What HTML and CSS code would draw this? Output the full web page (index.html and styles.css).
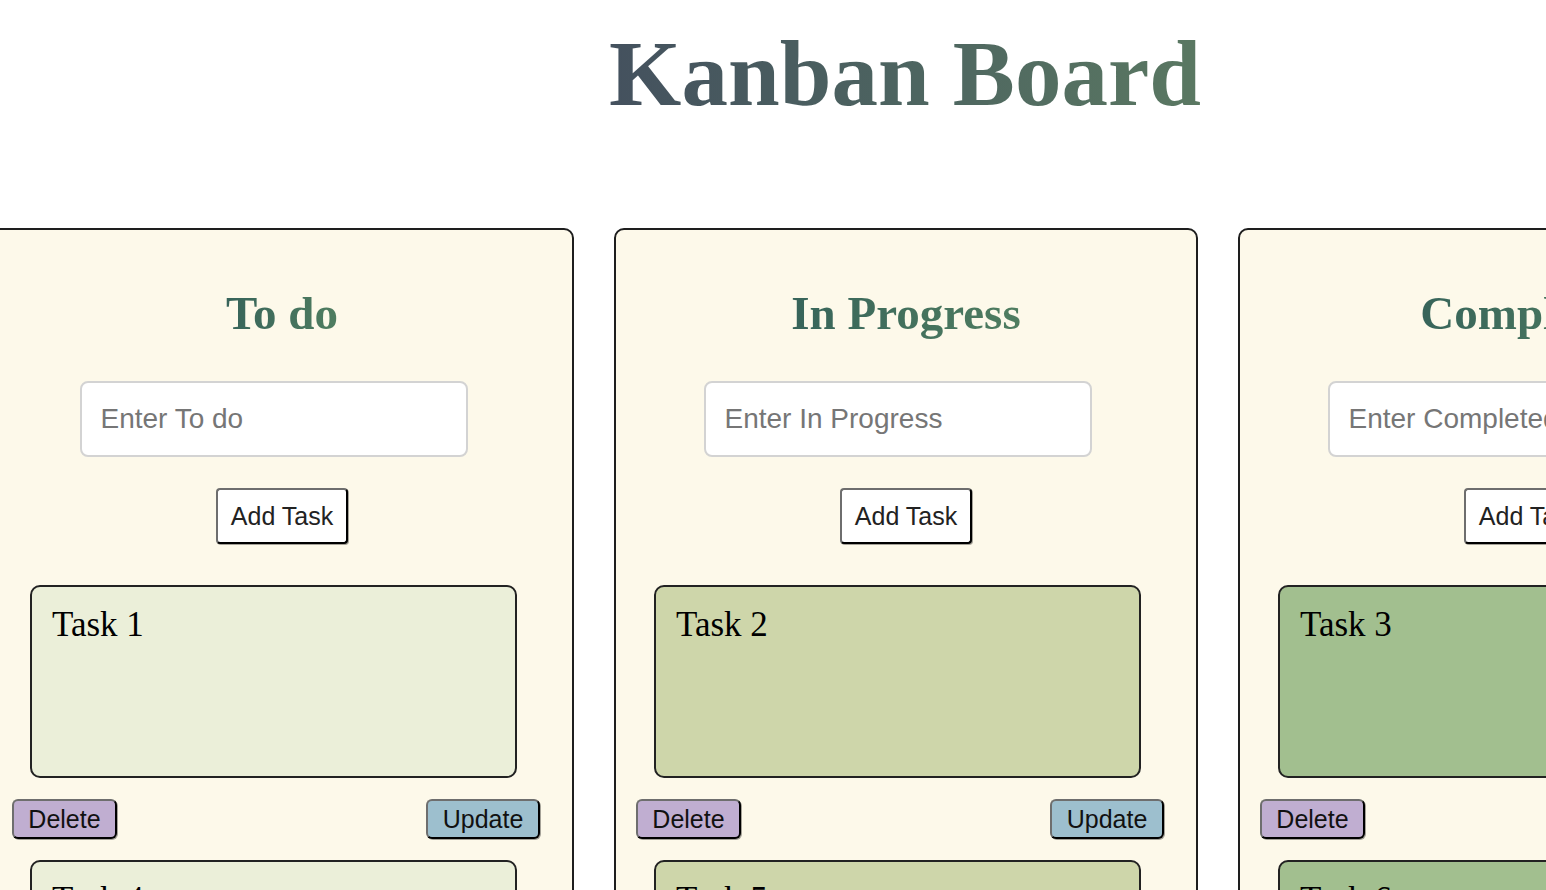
FILE: index.html
```html
<!DOCTYPE html>
<html lang="en">
<head>
<meta charset="utf-8">
<title>Kanban Board</title>
<link rel="stylesheet" href="styles.css">
</head>
<body>
<div class="page">
  <h1 class="title">Kanban Board</h1>
  <div class="board">
    <section class="column todo">
      <h2 class="column-title">To do</h2>
      <input class="task-input" type="text" placeholder="Enter To do">
      <button class="add-btn">Add Task</button>
      <div class="task">
        <div class="card">Task 1</div>
        <div class="actions"><button class="btn delete">Delete</button><button class="btn update">Update</button></div>
      </div>
      <div class="task">
        <div class="card">Task 4</div>
        <div class="actions"><button class="btn delete">Delete</button><button class="btn update">Update</button></div>
      </div>
    </section>
    <section class="column progress">
      <h2 class="column-title">In Progress</h2>
      <input class="task-input" type="text" placeholder="Enter In Progress">
      <button class="add-btn">Add Task</button>
      <div class="task">
        <div class="card">Task 2</div>
        <div class="actions"><button class="btn delete">Delete</button><button class="btn update">Update</button></div>
      </div>
      <div class="task">
        <div class="card">Task 5</div>
        <div class="actions"><button class="btn delete">Delete</button><button class="btn update">Update</button></div>
      </div>
    </section>
    <section class="column done">
      <h2 class="column-title">Completed</h2>
      <input class="task-input" type="text" placeholder="Enter Completed">
      <button class="add-btn">Add Task</button>
      <div class="task">
        <div class="card">Task 3</div>
        <div class="actions"><button class="btn delete">Delete</button><button class="btn update">Update</button></div>
      </div>
      <div class="task">
        <div class="card">Task 6</div>
        <div class="actions"><button class="btn delete">Delete</button><button class="btn update">Update</button></div>
      </div>
    </section>
  </div>
</div>
</body>
</html>
```
FILE: styles.css
```css
html, body {
  margin: 0;
  padding: 0;
  overflow: hidden;
  background: #ffffff;
}

.page {
  width: 1830px;
  margin-left: -10px;
  font-family: "Liberation Serif", "Times New Roman", serif;
}

.title {
  display: block;
  width: fit-content;
  margin: 21px auto 101px;
  font-size: 93px;
  line-height: 106px;
  font-weight: bold;
  text-align: center;
  background: linear-gradient(90deg, #44515e 0%, #4d6460 50%, #5a7862 100%);
  -webkit-background-clip: text;
  background-clip: text;
  color: transparent;
}

.board {
  display: flex;
  gap: 40px;
  align-items: flex-start;
}

.column {
  box-sizing: border-box;
  width: 584px;
  flex: 0 0 584px;
  height: 900px;
  border: 2px solid #1e1e1e;
  border-radius: 10px;
  background: #fdf9ea;
  padding-top: 57px;
  display: flex;
  flex-direction: column;
  align-items: center;
}

.column-title {
  margin: 0;
  font-size: 47px;
  line-height: 53px;
  font-weight: bold;
  background: linear-gradient(90deg, #37645a 0%, #4f7d60 100%);
  -webkit-background-clip: text;
  background-clip: text;
  color: transparent;
}

.task-input {
  box-sizing: border-box;
  width: 388px;
  height: 76px;
  margin: 41px 17px 0 0;
  padding: 0 19px;
  border: 2px solid #d3d3d3;
  border-radius: 8px;
  background: #ffffff;
  font-family: "Liberation Sans", Arial, sans-serif;
  font-size: 28px;
  color: #333;
  outline: none;
}

.task-input::placeholder {
  color: #767676;
}

.add-btn {
  box-sizing: border-box;
  width: 132px;
  height: 56px;
  margin-top: 31px;
  padding: 0;
  border: 2px solid;
  border-color: #6e6e6e #000 #000 #6e6e6e;
  border-radius: 4px;
  box-shadow: 1px 1px 0 rgba(0, 0, 0, 0.35);
  background: #ffffff;
  font-family: "Liberation Sans", Arial, sans-serif;
  font-size: 25px;
  color: #222;
}

.task {
  align-self: stretch;
  display: flex;
  flex-direction: column;
  margin-top: 41px;
}

.task + .task {
  margin-top: 21px;
}

.card {
  box-sizing: border-box;
  width: 487px;
  height: 193px;
  margin-left: 38px;
  padding: 18px 20px;
  border: 2px solid #222;
  border-radius: 10px;
  font-size: 35px;
  line-height: 39px;
  color: #000;
}

.todo .card { background: #ebefd9; }
.progress .card { background: #ced6aa; }
.done .card { background: #a2bf8f; }

.actions {
  display: flex;
  justify-content: space-between;
  margin-top: 21px;
  padding: 0 32px 0 20px;
}

.btn {
  box-sizing: border-box;
  height: 40px;
  padding: 0;
  border: 2px solid;
  border-color: #6e6e6e #000 #000 #6e6e6e;
  border-radius: 6px;
  box-shadow: 1px 1px 0 rgba(0, 0, 0, 0.35);
  font-family: "Liberation Sans", Arial, sans-serif;
  font-size: 25px;
  line-height: 36px;
  color: #111;
}

.delete {
  width: 105px;
  background: #c0aed1;
}

.update {
  width: 114px;
  background: #9dbfce;
}
```
